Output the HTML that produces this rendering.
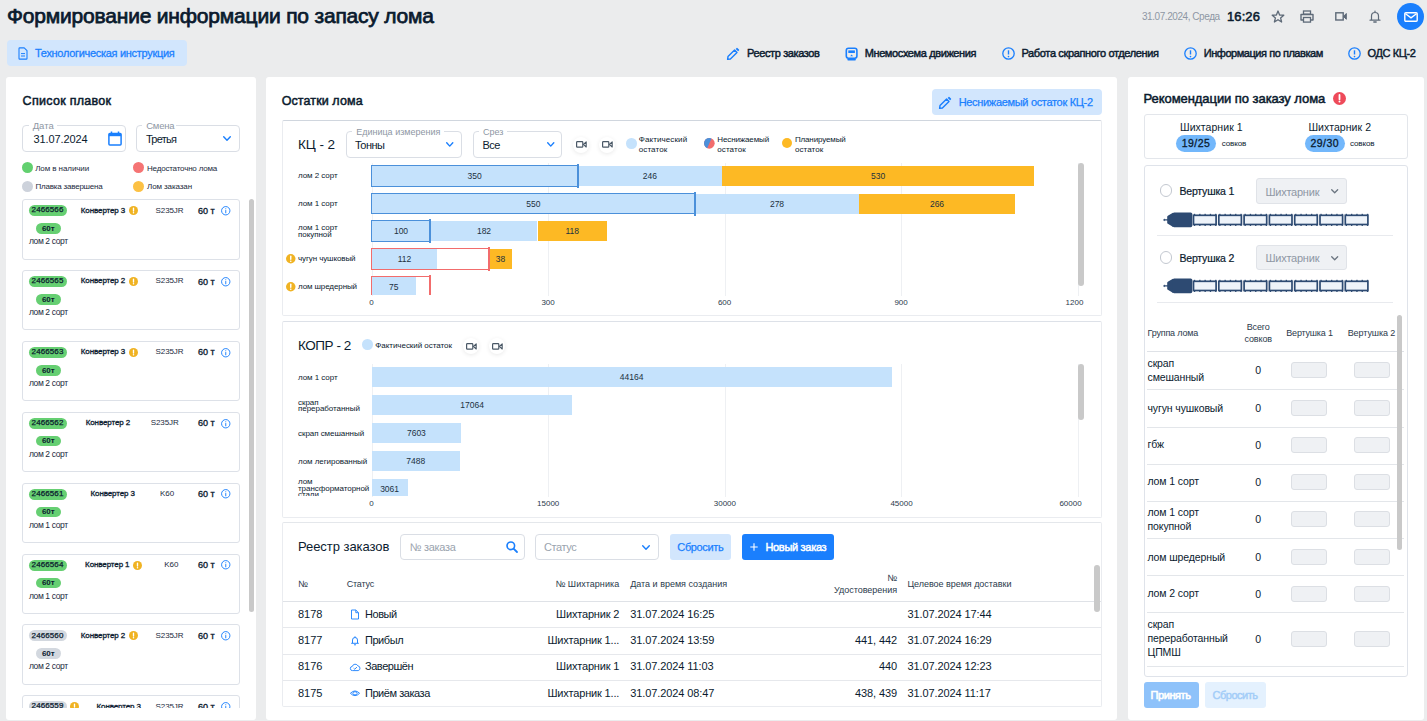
<!DOCTYPE html>
<html><head><meta charset="utf-8">
<style>
*{box-sizing:border-box;margin:0;padding:0}
html,body{width:1427px;height:721px;overflow:hidden;background:#ebeced;font-family:"Liberation Sans",sans-serif;color:#0b1b2f}
.a{position:absolute}
.t{position:absolute;white-space:nowrap;line-height:1}
.panel{position:absolute;background:#fff;border-radius:3px}
.box{position:absolute;border:1px solid #d5dae2;border-radius:3px}
svg{position:absolute;overflow:visible}
</style></head><body>
<!-- HEADER -->
<div class="t" style="left:7px;top:5.3px;font-size:21px;letter-spacing:-0.19px;color:#0a1a2d;-webkit-text-stroke:0.75px #0a1a2d">Формирование информации по запасу лома</div>
<div class="t" style="left:1142px;top:11.7px;font-size:10px;letter-spacing:-0.44px;color:#8e97a4">31.07.2024, Среда</div>
<div class="t" style="left:1227px;top:10px;font-size:13px;letter-spacing:0.1px;color:#0a1a2d;-webkit-text-stroke:0.55px #0a1a2d">16:26</div>
<!-- star -->
<svg style="left:1271px;top:10px" width="14" height="13" viewBox="0 0 14 13"><path d="M7 1 L8.6 5 L12.8 5.2 L9.6 7.9 L10.6 12 L7 9.7 L3.4 12 L4.4 7.9 L1.2 5.2 L5.4 5 Z" fill="none" stroke="#5e6a78" stroke-width="1.3" stroke-linejoin="round"/></svg>
<!-- printer -->
<svg style="left:1300px;top:10px" width="14" height="13" viewBox="0 0 14 13"><rect x="3.5" y="1" width="7" height="3.2" fill="none" stroke="#5e6a78" stroke-width="1.3"/><path d="M3 10 H1 V4.5 H13 V10 H11" fill="none" stroke="#5e6a78" stroke-width="1.4" stroke-linejoin="round"/><rect x="3.5" y="7.5" width="7" height="4.6" fill="none" stroke="#5e6a78" stroke-width="1.3"/></svg>
<!-- video -->
<svg style="left:1335px;top:12px" width="12" height="9" viewBox="0 0 12 9"><rect x="0.8" y="0.8" width="7.4" height="7.2" fill="none" stroke="#5e6a78" stroke-width="1.4"/><path d="M8.5 4.4 L11.3 1.5 V7.3 Z" fill="#5e6a78" stroke="#5e6a78" stroke-width="1"/></svg>
<!-- bell -->
<svg style="left:1369px;top:10px" width="12" height="13" viewBox="0 0 12 13"><path d="M1 10.2 H11 M2.5 10 V6 A3.5 3.5 0 0 1 9.5 6 V10 M6 1 V2.5" fill="none" stroke="#5e6a78" stroke-width="1.2" stroke-linecap="round"/><path d="M4.8 12 H7.2" stroke="#5e6a78" stroke-width="1.3" stroke-linecap="round"/></svg>
<!-- mail -->
<div class="a" style="left:1396.5px;top:3px;width:27px;height:27px;border-radius:50%;background:#1a7ffd"></div>
<svg style="left:1403.5px;top:12px" width="14" height="10" viewBox="0 0 14 10"><rect x="0.8" y="0.8" width="12.4" height="8.4" rx="1" fill="none" stroke="#fff" stroke-width="1.4"/><path d="M1.5 1.8 L7 5.8 L12.5 1.8" fill="none" stroke="#fff" stroke-width="1.4"/></svg>

<!-- NAV -->
<div class="a" style="left:6.5px;top:40px;width:180px;height:26px;border-radius:4px;background:#d2e6fd"></div>
<svg style="left:18px;top:47px" width="10" height="13" viewBox="0 0 10 13"><path d="M1 1.6 Q1 0.9 1.7 0.9 H6.2 L9 3.7 V11.4 Q9 12.1 8.3 12.1 H1.7 Q1 12.1 1 11.4 Z" fill="none" stroke="#1a7ffd" stroke-width="1.1" stroke-linejoin="round"/><path d="M3 6.6 H7 M3 9 H7" stroke="#1a7ffd" stroke-width="1"/></svg>
<div class="t" style="left:35px;top:47.8px;font-size:11px;letter-spacing:-0.3px;color:#1a7ffd;-webkit-text-stroke:0.3px #1a7ffd">Технологическая инструкция</div>

<svg style="left:726px;top:46.5px" width="14" height="14" viewBox="0 0 14 14"><path d="M1.6 12.4 L2 9.6 L8.6 3 L11 5.4 L4.4 12 Z" fill="none" stroke="#1a7ffd" stroke-width="1.4" stroke-linejoin="round"/><path d="M9.7 1.9 L10.6 1 Q11 0.6 11.4 1 L13 2.6 Q13.4 3 13 3.4 L12.1 4.3 Z" fill="#1a7ffd"/></svg>
<div class="t" style="left:747px;top:48.3px;font-size:11px;letter-spacing:-0.38px;-webkit-text-stroke:0.45px #0b1b2f">Реестр заказов</div>
<svg style="left:845px;top:46.5px" width="14" height="14" viewBox="0 0 14 14"><rect x="1.3" y="1.2" width="10.6" height="10" rx="2.2" fill="none" stroke="#1a7ffd" stroke-width="1.6"/><rect x="3.3" y="3.4" width="6.6" height="2.6" fill="#1a7ffd"/><path d="M5.2 9.2 L6.6 7.6 L8 9.2 Z" fill="#1a7ffd"/><rect x="2.4" y="11.4" width="8.4" height="2" rx="0.6" fill="#1a7ffd"/></svg>
<div class="t" style="left:864.7px;top:48.3px;font-size:11px;letter-spacing:-0.39px;-webkit-text-stroke:0.45px #0b1b2f">Мнемосхема движения</div>
<svg style="left:1001.5px;top:47px" width="13" height="13" viewBox="0 0 13 13"><circle cx="6.5" cy="6.5" r="5.7" fill="none" stroke="#1a7ffd" stroke-width="1.3"/><path d="M6.5 3.3 V7.5" stroke="#1a7ffd" stroke-width="1.4"/><circle cx="6.5" cy="9.6" r="0.8" fill="#1a7ffd"/></svg>
<div class="t" style="left:1021.5px;top:48.3px;font-size:11px;letter-spacing:-0.36px;-webkit-text-stroke:0.45px #0b1b2f">Работа скрапного отделения</div>
<svg style="left:1183.5px;top:47px" width="13" height="13" viewBox="0 0 13 13"><circle cx="6.5" cy="6.5" r="5.7" fill="none" stroke="#1a7ffd" stroke-width="1.3"/><path d="M6.5 3.3 V7.5" stroke="#1a7ffd" stroke-width="1.4"/><circle cx="6.5" cy="9.6" r="0.8" fill="#1a7ffd"/></svg>
<div class="t" style="left:1203.8px;top:48.3px;font-size:11px;letter-spacing:-0.46px;-webkit-text-stroke:0.45px #0b1b2f">Информация по плавкам</div>
<svg style="left:1348.3px;top:47px" width="13" height="13" viewBox="0 0 13 13"><circle cx="6.5" cy="6.5" r="5.7" fill="none" stroke="#1a7ffd" stroke-width="1.3"/><path d="M6.5 3.3 V7.5" stroke="#1a7ffd" stroke-width="1.4"/><circle cx="6.5" cy="9.6" r="0.8" fill="#1a7ffd"/></svg>
<div class="t" style="left:1367.6px;top:48.3px;font-size:11px;letter-spacing:-0.39px;-webkit-text-stroke:0.45px #0b1b2f">ОДС КЦ-2</div>

<!-- PANELS -->
<div class="panel" style="left:6px;top:77px;width:250px;height:643px"></div>
<div class="panel" style="left:266px;top:77px;width:851px;height:643px"></div>
<div class="panel" style="left:1128px;top:77px;width:296px;height:643px"></div>

<div class="t" style="left:22.6px;top:95.4px;font-size:12.5px;letter-spacing:0.29px;color:#0a1a2d;-webkit-text-stroke:0.5px #0a1a2d">Список плавок</div>
<div class="a" style="left:22px;top:125px;width:104px;height:27px;border:1px solid #dadee5;border-radius:4px"></div>
<div class="a" style="left:28.700000000000003px;top:124px;width:28.8px;height:3px;background:#fff"></div>
<div class="t" style="left:32.7px;top:121.3px;font-size:9.5px;color:#8e97a4">Дата</div>
<div class="t" style="left:33.5px;top:134.1px;font-size:11px;letter-spacing:-0.11px;color:#0b1b2f">31.07.2024</div>
<svg style="left:108px;top:131px" width="14" height="15" viewBox="0 0 14 15"><rect x="0.9" y="2.6" width="12.2" height="11.5" rx="1" fill="none" stroke="#1a7ffd" stroke-width="1.5"/><rect x="0.9" y="2.6" width="12.2" height="2.6" fill="#1a7ffd"/><path d="M3.5 0.5 V3 M10.5 0.5 V3" stroke="#1a7ffd" stroke-width="1.5"/></svg>
<div class="a" style="left:136px;top:125px;width:104px;height:27px;border:1px solid #dadee5;border-radius:4px"></div>
<div class="a" style="left:142.2px;top:124px;width:34.0px;height:3px;background:#fff"></div>
<div class="t" style="left:146.2px;top:121.3px;font-size:9.5px;letter-spacing:-0.2px;color:#8e97a4">Смена</div>
<div class="t" style="left:145.9px;top:134.1px;font-size:11px;letter-spacing:-0.73px;color:#0b1b2f">Третья</div>
<svg style="left:223.3px;top:136.3px" width="8" height="5" viewBox="0 0 8 5"><path d="M0.7 0.7 L4.0 4.3 L7.3 0.7" fill="none" stroke="#1a7ffd" stroke-width="1.4" stroke-linecap="round" stroke-linejoin="round"/></svg>
<div class="a" style="left:21.7px;top:161.9px;width:11px;height:11px;border-radius:50%;background:#62d06f"></div>
<div class="t" style="left:35.2px;top:164.8px;font-size:8px;letter-spacing:-0.08px;color:#1b2a3d">Лом в наличии</div>
<div class="a" style="left:133.2px;top:161.9px;width:11px;height:11px;border-radius:50%;background:#f57474"></div>
<div class="t" style="left:147.0px;top:164.8px;font-size:8px;letter-spacing:-0.19px;color:#1b2a3d">Недостаточно лома</div>
<div class="a" style="left:21.7px;top:180.5px;width:11px;height:11px;border-radius:50%;background:#cdd2db"></div>
<div class="t" style="left:35.5px;top:183.4px;font-size:8px;letter-spacing:-0.21px;color:#1b2a3d">Плавка завершена</div>
<div class="a" style="left:133.2px;top:180.5px;width:11px;height:11px;border-radius:50%;background:#fcc144"></div>
<div class="t" style="left:147.0px;top:183.4px;font-size:8px;letter-spacing:-0.1px;color:#1b2a3d">Лом заказан</div>
<div class="a" style="left:0;top:199px;width:260px;height:509px;overflow:hidden">
<div class="a" style="left:22px;top:0.3px;width:218px;height:60.3px;border:1px solid #dde1e8;border-radius:3px"></div>
<div class="a" style="left:28.5px;top:6.3px;width:38px;height:11px;border-radius:6px;background:#66cf72"></div>
<div class="t" style="left:31.6px;top:7.4px;font-size:8px;letter-spacing:0.1px;color:#0b1b2f;-webkit-text-stroke:0.25px #0b1b2f">2466566</div>
<div class="t" style="left:80.8px;top:7.5px;font-size:8px;letter-spacing:-0.11px;color:#0b1b2f;-webkit-text-stroke:0.3px #0b1b2f">Конвертер 3</div>
<svg style="left:128.8px;top:7.3px" width="9" height="9" viewBox="0 0 10 10"><circle cx="5" cy="5" r="5" fill="#f0b323"/><path d="M5 2.3 V5.6" stroke="#fff" stroke-width="1.5" stroke-linecap="round"/><circle cx="5" cy="7.6" r="0.85" fill="#fff"/></svg>
<div class="t" style="left:155.5px;top:7.5px;font-size:8px;letter-spacing:-0.08px;color:#1b2a3d">S235JR</div>
<div class="t" style="left:197.9px;top:7.7px;font-size:9px;letter-spacing:0.05px;color:#0b1b2f;-webkit-text-stroke:0.35px #0b1b2f">60 т</div>
<svg style="left:220.6px;top:7.1px" width="9.5" height="9.5" viewBox="0 0 10 10"><circle cx="5" cy="5" r="4.4" fill="none" stroke="#1a7ffd" stroke-width="1"/><path d="M5 4.3 V7.6" stroke="#1a7ffd" stroke-width="1"/><circle cx="5" cy="2.9" r="0.6" fill="#1a7ffd"/></svg>
<div class="a" style="left:36px;top:24.3px;width:25px;height:10.5px;border-radius:6px;background:#66cf72"></div>
<div class="t" style="left:41.9px;top:25.8px;font-size:8px;font-weight:700;color:#0b1b2f">60т</div>
<div class="t" style="left:28.9px;top:38.3px;font-size:8.5px;letter-spacing:-0.38px;color:#1b2a3d">лом 2 сорт</div>
<div class="a" style="left:22px;top:71.15px;width:218px;height:60.3px;border:1px solid #dde1e8;border-radius:3px"></div>
<div class="a" style="left:28.5px;top:77.15px;width:38px;height:11px;border-radius:6px;background:#66cf72"></div>
<div class="t" style="left:31.6px;top:78.3px;font-size:8px;letter-spacing:0.1px;color:#0b1b2f;-webkit-text-stroke:0.25px #0b1b2f">2466565</div>
<div class="t" style="left:80.8px;top:78.4px;font-size:8px;letter-spacing:-0.11px;color:#0b1b2f;-webkit-text-stroke:0.3px #0b1b2f">Конвертер 2</div>
<svg style="left:128.8px;top:78.2px" width="9" height="9" viewBox="0 0 10 10"><circle cx="5" cy="5" r="5" fill="#f0b323"/><path d="M5 2.3 V5.6" stroke="#fff" stroke-width="1.5" stroke-linecap="round"/><circle cx="5" cy="7.6" r="0.85" fill="#fff"/></svg>
<div class="t" style="left:155.5px;top:78.4px;font-size:8px;letter-spacing:-0.08px;color:#1b2a3d">S235JR</div>
<div class="t" style="left:197.9px;top:78.5px;font-size:9px;letter-spacing:0.05px;color:#0b1b2f;-webkit-text-stroke:0.35px #0b1b2f">60 т</div>
<svg style="left:220.6px;top:77.9px" width="9.5" height="9.5" viewBox="0 0 10 10"><circle cx="5" cy="5" r="4.4" fill="none" stroke="#1a7ffd" stroke-width="1"/><path d="M5 4.3 V7.6" stroke="#1a7ffd" stroke-width="1"/><circle cx="5" cy="2.9" r="0.6" fill="#1a7ffd"/></svg>
<div class="a" style="left:36px;top:95.15px;width:25px;height:10.5px;border-radius:6px;background:#66cf72"></div>
<div class="t" style="left:41.9px;top:96.7px;font-size:8px;font-weight:700;color:#0b1b2f">60т</div>
<div class="t" style="left:28.9px;top:109.2px;font-size:8.5px;letter-spacing:-0.38px;color:#1b2a3d">лом 2 сорт</div>
<div class="a" style="left:22px;top:142.0px;width:218px;height:60.3px;border:1px solid #dde1e8;border-radius:3px"></div>
<div class="a" style="left:28.5px;top:148.0px;width:38px;height:11px;border-radius:6px;background:#66cf72"></div>
<div class="t" style="left:31.6px;top:149.1px;font-size:8px;letter-spacing:0.1px;color:#0b1b2f;-webkit-text-stroke:0.25px #0b1b2f">2466563</div>
<div class="t" style="left:80.8px;top:149.2px;font-size:8px;letter-spacing:-0.11px;color:#0b1b2f;-webkit-text-stroke:0.3px #0b1b2f">Конвертер 3</div>
<svg style="left:128.8px;top:149.0px" width="9" height="9" viewBox="0 0 10 10"><circle cx="5" cy="5" r="5" fill="#f0b323"/><path d="M5 2.3 V5.6" stroke="#fff" stroke-width="1.5" stroke-linecap="round"/><circle cx="5" cy="7.6" r="0.85" fill="#fff"/></svg>
<div class="t" style="left:155.5px;top:149.2px;font-size:8px;letter-spacing:-0.08px;color:#1b2a3d">S235JR</div>
<div class="t" style="left:197.9px;top:149.4px;font-size:9px;letter-spacing:0.05px;color:#0b1b2f;-webkit-text-stroke:0.35px #0b1b2f">60 т</div>
<svg style="left:220.6px;top:148.8px" width="9.5" height="9.5" viewBox="0 0 10 10"><circle cx="5" cy="5" r="4.4" fill="none" stroke="#1a7ffd" stroke-width="1"/><path d="M5 4.3 V7.6" stroke="#1a7ffd" stroke-width="1"/><circle cx="5" cy="2.9" r="0.6" fill="#1a7ffd"/></svg>
<div class="a" style="left:36px;top:166.0px;width:25px;height:10.5px;border-radius:6px;background:#66cf72"></div>
<div class="t" style="left:41.9px;top:167.5px;font-size:8px;font-weight:700;color:#0b1b2f">60т</div>
<div class="t" style="left:28.9px;top:180.0px;font-size:8.5px;letter-spacing:-0.38px;color:#1b2a3d">лом 2 сорт</div>
<div class="a" style="left:22px;top:212.85px;width:218px;height:60.3px;border:1px solid #dde1e8;border-radius:3px"></div>
<div class="a" style="left:28.5px;top:218.85px;width:38px;height:11px;border-radius:6px;background:#66cf72"></div>
<div class="t" style="left:31.6px;top:220.0px;font-size:8px;letter-spacing:0.1px;color:#0b1b2f;-webkit-text-stroke:0.25px #0b1b2f">2466562</div>
<div class="t" style="left:85.7px;top:220.1px;font-size:8px;letter-spacing:-0.11px;color:#0b1b2f;-webkit-text-stroke:0.3px #0b1b2f">Конвертер 2</div>
<div class="t" style="left:150.7px;top:220.1px;font-size:8px;letter-spacing:-0.08px;color:#1b2a3d">S235JR</div>
<div class="t" style="left:197.9px;top:220.2px;font-size:9px;letter-spacing:0.05px;color:#0b1b2f;-webkit-text-stroke:0.35px #0b1b2f">60 т</div>
<svg style="left:220.6px;top:219.6px" width="9.5" height="9.5" viewBox="0 0 10 10"><circle cx="5" cy="5" r="4.4" fill="none" stroke="#1a7ffd" stroke-width="1"/><path d="M5 4.3 V7.6" stroke="#1a7ffd" stroke-width="1"/><circle cx="5" cy="2.9" r="0.6" fill="#1a7ffd"/></svg>
<div class="a" style="left:36px;top:236.85px;width:25px;height:10.5px;border-radius:6px;background:#66cf72"></div>
<div class="t" style="left:41.9px;top:238.4px;font-size:8px;font-weight:700;color:#0b1b2f">60т</div>
<div class="t" style="left:28.9px;top:250.9px;font-size:8.5px;letter-spacing:-0.38px;color:#1b2a3d">лом 2 сорт</div>
<div class="a" style="left:22px;top:283.7px;width:218px;height:60.3px;border:1px solid #dde1e8;border-radius:3px"></div>
<div class="a" style="left:28.5px;top:289.7px;width:38px;height:11px;border-radius:6px;background:#66cf72"></div>
<div class="t" style="left:31.6px;top:290.8px;font-size:8px;letter-spacing:0.1px;color:#0b1b2f;-webkit-text-stroke:0.25px #0b1b2f">2466561</div>
<div class="t" style="left:90.5px;top:290.9px;font-size:8px;letter-spacing:-0.11px;color:#0b1b2f;-webkit-text-stroke:0.3px #0b1b2f">Конвертер 3</div>
<div class="t" style="left:160.0px;top:290.9px;font-size:8px;letter-spacing:-0.08px;color:#1b2a3d">K60</div>
<div class="t" style="left:197.9px;top:291.1px;font-size:9px;letter-spacing:0.05px;color:#0b1b2f;-webkit-text-stroke:0.35px #0b1b2f">60 т</div>
<svg style="left:220.6px;top:290.4px" width="9.5" height="9.5" viewBox="0 0 10 10"><circle cx="5" cy="5" r="4.4" fill="none" stroke="#1a7ffd" stroke-width="1"/><path d="M5 4.3 V7.6" stroke="#1a7ffd" stroke-width="1"/><circle cx="5" cy="2.9" r="0.6" fill="#1a7ffd"/></svg>
<div class="a" style="left:36px;top:307.7px;width:25px;height:10.5px;border-radius:6px;background:#66cf72"></div>
<div class="t" style="left:41.9px;top:309.2px;font-size:8px;font-weight:700;color:#0b1b2f">60т</div>
<div class="t" style="left:28.9px;top:321.7px;font-size:8.5px;letter-spacing:-0.38px;color:#1b2a3d">лом 1 сорт</div>
<div class="a" style="left:22px;top:354.55px;width:218px;height:60.3px;border:1px solid #dde1e8;border-radius:3px"></div>
<div class="a" style="left:28.5px;top:360.55px;width:38px;height:11px;border-radius:6px;background:#66cf72"></div>
<div class="t" style="left:31.6px;top:361.7px;font-size:8px;letter-spacing:0.1px;color:#0b1b2f;-webkit-text-stroke:0.25px #0b1b2f">2466564</div>
<div class="t" style="left:85.1px;top:361.8px;font-size:8px;letter-spacing:-0.11px;color:#0b1b2f;-webkit-text-stroke:0.3px #0b1b2f">Конвертер 1</div>
<svg style="left:133.1px;top:361.6px" width="9" height="9" viewBox="0 0 10 10"><circle cx="5" cy="5" r="5" fill="#f0b323"/><path d="M5 2.3 V5.6" stroke="#fff" stroke-width="1.5" stroke-linecap="round"/><circle cx="5" cy="7.6" r="0.85" fill="#fff"/></svg>
<div class="t" style="left:164.3px;top:361.8px;font-size:8px;letter-spacing:-0.08px;color:#1b2a3d">K60</div>
<div class="t" style="left:197.9px;top:361.9px;font-size:9px;letter-spacing:0.05px;color:#0b1b2f;-webkit-text-stroke:0.35px #0b1b2f">60 т</div>
<svg style="left:220.6px;top:361.3px" width="9.5" height="9.5" viewBox="0 0 10 10"><circle cx="5" cy="5" r="4.4" fill="none" stroke="#1a7ffd" stroke-width="1"/><path d="M5 4.3 V7.6" stroke="#1a7ffd" stroke-width="1"/><circle cx="5" cy="2.9" r="0.6" fill="#1a7ffd"/></svg>
<div class="a" style="left:36px;top:378.55px;width:25px;height:10.5px;border-radius:6px;background:#66cf72"></div>
<div class="t" style="left:41.9px;top:380.1px;font-size:8px;font-weight:700;color:#0b1b2f">60т</div>
<div class="t" style="left:28.9px;top:392.6px;font-size:8.5px;letter-spacing:-0.38px;color:#1b2a3d">лом 1 сорт</div>
<div class="a" style="left:22px;top:425.4px;width:218px;height:60.3px;border:1px solid #dde1e8;border-radius:3px"></div>
<div class="a" style="left:28.5px;top:431.4px;width:38px;height:11px;border-radius:6px;background:#d3d8df"></div>
<div class="t" style="left:31.6px;top:432.5px;font-size:8px;letter-spacing:0.1px;color:#0b1b2f;-webkit-text-stroke:0.25px #0b1b2f">2466560</div>
<div class="t" style="left:80.8px;top:432.6px;font-size:8px;letter-spacing:-0.11px;color:#0b1b2f;-webkit-text-stroke:0.3px #0b1b2f">Конвертер 2</div>
<svg style="left:128.8px;top:432.4px" width="9" height="9" viewBox="0 0 10 10"><circle cx="5" cy="5" r="5" fill="#f0b323"/><path d="M5 2.3 V5.6" stroke="#fff" stroke-width="1.5" stroke-linecap="round"/><circle cx="5" cy="7.6" r="0.85" fill="#fff"/></svg>
<div class="t" style="left:155.5px;top:432.6px;font-size:8px;letter-spacing:-0.08px;color:#1b2a3d">S235JR</div>
<div class="t" style="left:197.9px;top:432.8px;font-size:9px;letter-spacing:0.05px;color:#0b1b2f;-webkit-text-stroke:0.35px #0b1b2f">60 т</div>
<svg style="left:220.6px;top:432.1px" width="9.5" height="9.5" viewBox="0 0 10 10"><circle cx="5" cy="5" r="4.4" fill="none" stroke="#1a7ffd" stroke-width="1"/><path d="M5 4.3 V7.6" stroke="#1a7ffd" stroke-width="1"/><circle cx="5" cy="2.9" r="0.6" fill="#1a7ffd"/></svg>
<div class="a" style="left:36px;top:449.4px;width:25px;height:10.5px;border-radius:6px;background:#d3d8df"></div>
<div class="t" style="left:41.9px;top:450.9px;font-size:8px;font-weight:700;color:#0b1b2f">60т</div>
<div class="t" style="left:28.9px;top:463.4px;font-size:8.5px;letter-spacing:-0.38px;color:#1b2a3d">лом 2 сорт</div>
<div class="a" style="left:22px;top:496.25px;width:218px;height:60.3px;border:1px solid #dde1e8;border-radius:3px"></div>
<div class="a" style="left:28.5px;top:502.25px;width:38px;height:11px;border-radius:6px;background:#d3d8df"></div>
<div class="t" style="left:31.6px;top:503.4px;font-size:8px;letter-spacing:0.1px;color:#0b1b2f;-webkit-text-stroke:0.25px #0b1b2f">2466559</div>
<div class="t" style="left:96.5px;top:503.5px;font-size:8px;letter-spacing:-0.11px;color:#0b1b2f;-webkit-text-stroke:0.3px #0b1b2f">Конвертер 3</div>
<svg style="left:69.8px;top:503.2px" width="9" height="9" viewBox="0 0 10 10"><circle cx="5" cy="5" r="5" fill="#f0b323"/><path d="M5 2.3 V5.6" stroke="#fff" stroke-width="1.5" stroke-linecap="round"/><circle cx="5" cy="7.6" r="0.85" fill="#fff"/></svg>
<div class="t" style="left:155.5px;top:503.5px;font-size:8px;letter-spacing:-0.08px;color:#1b2a3d">S235JR</div>
<div class="t" style="left:197.9px;top:503.6px;font-size:9px;letter-spacing:0.05px;color:#0b1b2f;-webkit-text-stroke:0.35px #0b1b2f">60 т</div>
<svg style="left:220.6px;top:503.0px" width="9.5" height="9.5" viewBox="0 0 10 10"><circle cx="5" cy="5" r="4.4" fill="none" stroke="#1a7ffd" stroke-width="1"/><path d="M5 4.3 V7.6" stroke="#1a7ffd" stroke-width="1"/><circle cx="5" cy="2.9" r="0.6" fill="#1a7ffd"/></svg>
<div class="a" style="left:36px;top:520.25px;width:25px;height:10.5px;border-radius:6px;background:#d3d8df"></div>
<div class="t" style="left:41.9px;top:521.8px;font-size:8px;font-weight:700;color:#0b1b2f">60т</div>
<div class="t" style="left:28.9px;top:534.3px;font-size:8.5px;letter-spacing:-0.38px;color:#1b2a3d">лом 2 сорт</div>
</div>
<div class="a" style="left:249px;top:199px;width:5px;height:413px;border-radius:3px;background:#c9c9c9"></div>
<div class="t" style="left:281.7px;top:95.1px;font-size:12.5px;letter-spacing:0.1px;color:#0a1a2d;-webkit-text-stroke:0.5px #0a1a2d">Остатки лома</div>
<div class="a" style="left:931.5px;top:89.3px;width:170.5px;height:25.5px;border-radius:4px;background:#d2e6fd"></div>
<svg style="left:937.5px;top:95.5px" width="14" height="14" viewBox="0 0 14 14"><path d="M1.6 12.4 L2 9.6 L8.6 3 L11 5.4 L4.4 12 Z" fill="none" stroke="#1a7ffd" stroke-width="1.4" stroke-linejoin="round"/><path d="M9.7 1.9 L10.6 1 Q11 0.6 11.4 1 L13 2.6 Q13.4 3 13 3.4 L12.1 4.3 Z" fill="#1a7ffd"/></svg>
<div class="t" style="left:958.7px;top:96.9px;font-size:11px;letter-spacing:-0.32px;color:#1a7ffd;-webkit-text-stroke:0.25px #1a7ffd">Неснижаемый остаток КЦ-2</div>
<div class="a" style="left:282px;top:120px;width:820px;height:196px;border:1px solid #eaecf0;border-top-color:#d0d6de;border-radius:2px"></div>
<div class="t" style="left:298.0px;top:137.8px;font-size:13.5px;letter-spacing:-0.07px;color:#0b1b2f">КЦ - 2</div>
<div class="a" style="left:346.2px;top:131.1px;width:115.7px;height:26.7px;border:1px solid #dadee5;border-radius:4px"></div>
<div class="a" style="left:352.2px;top:130.1px;width:92px;height:3px;background:#fff"></div>
<div class="t" style="left:356.2px;top:128.1px;font-size:9px;color:#8e97a4">Единица измерения</div>
<div class="t" style="left:355.0px;top:139.6px;font-size:11px;letter-spacing:-0.53px;color:#0b1b2f">Тонны</div>
<svg style="left:445.7px;top:142px" width="7.5" height="4.8" viewBox="0 0 7.5 4.8"><path d="M0.7 0.7 L3.75 4.1 L6.8 0.7" fill="none" stroke="#1a7ffd" stroke-width="1.4" stroke-linecap="round" stroke-linejoin="round"/></svg>
<div class="a" style="left:473.1px;top:131.1px;width:89.3px;height:26.7px;border:1px solid #dadee5;border-radius:4px"></div>
<div class="a" style="left:479px;top:130.1px;width:28px;height:3px;background:#fff"></div>
<div class="t" style="left:483.0px;top:128.1px;font-size:9px;color:#8e97a4">Срез</div>
<div class="t" style="left:482.5px;top:139.6px;font-size:11px;letter-spacing:-0.5px;color:#0b1b2f">Все</div>
<svg style="left:546.7px;top:141.7px" width="7.5" height="4.8" viewBox="0 0 7.5 4.8"><path d="M0.7 0.7 L3.75 4.1 L6.8 0.7" fill="none" stroke="#1a7ffd" stroke-width="1.4" stroke-linecap="round" stroke-linejoin="round"/></svg>
<div class="a" style="left:573.3px;top:136.7px;width:16px;height:16px;border-radius:50%;background:#fff;box-shadow:0 1px 4px rgba(0,0,0,0.09)"></div>
<svg style="left:576.3px;top:141.2px" width="11" height="7" viewBox="0 0 11 7"><rect x="0.6" y="0.6" width="6.2" height="5.6" rx="0.8" fill="none" stroke="#4a5866" stroke-width="1.2"/><path d="M7.4 3.4 L10.2 0.8 V6 Z" fill="none" stroke="#4a5866" stroke-width="1.1" stroke-linejoin="round"/></svg>
<div class="a" style="left:598.8px;top:136.7px;width:16px;height:16px;border-radius:50%;background:#fff;box-shadow:0 1px 4px rgba(0,0,0,0.09)"></div>
<svg style="left:601.8px;top:141.2px" width="11" height="7" viewBox="0 0 11 7"><rect x="0.6" y="0.6" width="6.2" height="5.6" rx="0.8" fill="none" stroke="#4a5866" stroke-width="1.2"/><path d="M7.4 3.4 L10.2 0.8 V6 Z" fill="none" stroke="#4a5866" stroke-width="1.1" stroke-linejoin="round"/></svg>
<div class="a" style="left:626px;top:138px;width:10.5px;height:10.5px;border-radius:50%;background:#c5e2fc"></div>
<div class="t" style="left:638.8px;top:136.2px;font-size:8px;letter-spacing:0.1px;color:#0b1b2f">Фактический</div>
<div class="t" style="left:638.8px;top:145.7px;font-size:8px;letter-spacing:0.1px;color:#0b1b2f">остаток</div>
<svg style="left:703.8px;top:137.8px" width="10.7" height="10.7" viewBox="0 0 10 10"><circle cx="5" cy="5" r="5" fill="#f26c6c"/><path d="M7 0.4 A5 5 0 0 0 3 9.6 Z" fill="#4b90da"/></svg>
<div class="t" style="left:717.3px;top:136.2px;font-size:8px;letter-spacing:-0.12px;color:#0b1b2f">Неснижаемый</div>
<div class="t" style="left:717.3px;top:145.7px;font-size:8px;letter-spacing:0.1px;color:#0b1b2f">остаток</div>
<div class="a" style="left:781.7px;top:137.8px;width:10.7px;height:10.7px;border-radius:50%;background:#fdb924"></div>
<div class="t" style="left:794.9px;top:136.2px;font-size:8px;letter-spacing:-0.13px;color:#0b1b2f">Планируемый</div>
<div class="t" style="left:794.9px;top:145.7px;font-size:8px;letter-spacing:0.1px;color:#0b1b2f">остаток</div>
<div class="a" style="left:372px;top:163px;width:1px;height:133px;background:#eef0f3"></div>
<div class="t" style="left:371.6px;transform:translateX(-50%);top:299.2px;font-size:8px;color:#2b3a4c">0</div>
<div class="a" style="left:548px;top:163px;width:1px;height:133px;background:#eef0f3"></div>
<div class="t" style="left:548.1px;transform:translateX(-50%);top:299.2px;font-size:8px;color:#2b3a4c">300</div>
<div class="a" style="left:725px;top:163px;width:1px;height:133px;background:#eef0f3"></div>
<div class="t" style="left:724.6px;transform:translateX(-50%);top:299.2px;font-size:8px;color:#2b3a4c">600</div>
<div class="a" style="left:901px;top:163px;width:1px;height:133px;background:#eef0f3"></div>
<div class="t" style="left:901.1px;transform:translateX(-50%);top:299.2px;font-size:8px;color:#2b3a4c">900</div>
<div class="a" style="left:1078px;top:163px;width:1px;height:133px;background:#eef0f3"></div>
<div class="t" style="left:1074.5px;transform:translateX(-50%);top:299.2px;font-size:8px;color:#2b3a4c">1200</div>
<div class="a" style="left:282px;top:163px;width:810px;height:131.6px;overflow:hidden">
<div class="a" style="left:89.6px;top:2.9px;width:205.9px;height:20px;background:#c5e2fc"></div>
<div class="a" style="left:295.5px;top:2.9px;width:144.7px;height:20px;background:#c5e2fc"></div>
<div class="a" style="left:440.2px;top:2.9px;width:311.8px;height:20px;background:#fdb924"></div>
<div class="a" style="left:88.9px;top:2.2px;width:207.3px;height:21.4px;border:1.5px solid #4b90da"></div>
<div class="a" style="left:294.5px;top:0.9px;width:2px;height:24px;background:#4b90da"></div>
<div class="t" style="left:192.6px;transform:translateX(-50%);top:8.9px;font-size:8.5px;color:#22313f">350</div>
<div class="t" style="left:367.9px;transform:translateX(-50%);top:8.9px;font-size:8.5px;color:#22313f">246</div>
<div class="t" style="left:596.2px;transform:translateX(-50%);top:8.9px;font-size:8.5px;color:#22313f">530</div>
<div class="a" style="left:89.6px;top:30.8px;width:323.6px;height:20px;background:#c5e2fc"></div>
<div class="a" style="left:413.2px;top:30.8px;width:163.6px;height:20px;background:#c5e2fc"></div>
<div class="a" style="left:576.7px;top:30.8px;width:156.5px;height:20px;background:#fdb924"></div>
<div class="a" style="left:88.9px;top:30.1px;width:325.0px;height:21.4px;border:1.5px solid #4b90da"></div>
<div class="a" style="left:412.2px;top:28.8px;width:2px;height:24px;background:#4b90da"></div>
<div class="t" style="left:251.4px;transform:translateX(-50%);top:36.8px;font-size:8.5px;color:#22313f">550</div>
<div class="t" style="left:495.0px;transform:translateX(-50%);top:36.8px;font-size:8.5px;color:#22313f">278</div>
<div class="t" style="left:655.0px;transform:translateX(-50%);top:36.8px;font-size:8.5px;color:#22313f">266</div>
<div class="a" style="left:89.6px;top:58.1px;width:58.8px;height:20px;background:#c5e2fc"></div>
<div class="a" style="left:148.4px;top:58.1px;width:107.1px;height:20px;background:#c5e2fc"></div>
<div class="a" style="left:255.5px;top:58.1px;width:69.4px;height:20px;background:#fdb924"></div>
<div class="a" style="left:88.9px;top:57.4px;width:60.2px;height:21.4px;border:1.5px solid #4b90da"></div>
<div class="a" style="left:147.4px;top:56.1px;width:2px;height:24px;background:#4b90da"></div>
<div class="t" style="left:119.0px;transform:translateX(-50%);top:64.1px;font-size:8.5px;color:#22313f">100</div>
<div class="t" style="left:202.0px;transform:translateX(-50%);top:64.1px;font-size:8.5px;color:#22313f">182</div>
<div class="t" style="left:290.2px;transform:translateX(-50%);top:64.1px;font-size:8.5px;color:#22313f">118</div>
<div class="a" style="left:89.60000000000002px;top:86.0px;width:65.9px;height:20px;background:#c5e2fc"></div>
<div class="a" style="left:207.3px;top:86.0px;width:22.4px;height:20px;background:#fdb924"></div>
<div class="a" style="left:88.9px;top:85.3px;width:119.1px;height:21.4px;border:1.5px solid #f26c6c"></div>
<div class="a" style="left:206.3px;top:84.0px;width:2px;height:24px;background:#f26c6c"></div>
<div class="t" style="left:122.5px;transform:translateX(-50%);top:92.0px;font-size:8.5px;color:#22313f">112</div>
<div class="t" style="left:218.4px;transform:translateX(-50%);top:92.0px;font-size:8.5px;color:#22313f">38</div>
<div class="a" style="left:89.60000000000002px;top:113.7px;width:44.1px;height:20px;background:#c5e2fc"></div>
<div class="a" style="left:88.9px;top:113.0px;width:60.2px;height:21.4px;border:1.5px solid #f26c6c"></div>
<div class="a" style="left:147.4px;top:111.7px;width:2px;height:24px;background:#f26c6c"></div>
<div class="t" style="left:111.7px;transform:translateX(-50%);top:119.7px;font-size:8.5px;color:#22313f">75</div>
</div>
<div class="t" style="left:298.0px;top:172.2px;font-size:8px;letter-spacing:-0.05px;color:#0b1b2f">лом 2 сорт</div>
<div class="t" style="left:298.0px;top:199.7px;font-size:8px;letter-spacing:-0.05px;color:#0b1b2f">лом 1 сорт</div>
<div class="t" style="left:298.0px;top:224.2px;font-size:8px;letter-spacing:-0.05px;color:#0b1b2f">лом 1 сорт</div>
<div class="t" style="left:298.0px;top:230.7px;font-size:8px;letter-spacing:-0.05px;color:#0b1b2f">покупной</div>
<svg style="left:285.8px;top:253.9px" width="9.5" height="9.5" viewBox="0 0 10 10"><circle cx="5" cy="5" r="5" fill="#f0b323"/><path d="M5 2.3 V5.6" stroke="#fff" stroke-width="1.5" stroke-linecap="round"/><circle cx="5" cy="7.6" r="0.85" fill="#fff"/></svg>
<div class="t" style="left:298.0px;top:254.7px;font-size:8px;letter-spacing:-0.1px;color:#0b1b2f">чугун чушковый</div>
<svg style="left:285.8px;top:281.6px" width="9.5" height="9.5" viewBox="0 0 10 10"><circle cx="5" cy="5" r="5" fill="#f0b323"/><path d="M5 2.3 V5.6" stroke="#fff" stroke-width="1.5" stroke-linecap="round"/><circle cx="5" cy="7.6" r="0.85" fill="#fff"/></svg>
<div class="t" style="left:298.0px;top:282.5px;font-size:8px;letter-spacing:-0.1px;color:#0b1b2f">лом шредерный</div>
<div class="a" style="left:1077.6px;top:162.7px;width:6px;height:123.7px;border-radius:3px;background:#c9c9c9"></div>
<div class="a" style="left:282px;top:321px;width:820px;height:196.5px;border:1px solid #eaecf0;border-top-color:#dde1e8;border-radius:2px"></div>
<div class="t" style="left:298.0px;top:338.6px;font-size:13.5px;letter-spacing:-0.45px;color:#0b1b2f">КОПР - 2</div>
<div class="a" style="left:362px;top:339.2px;width:10.6px;height:10.6px;border-radius:50%;background:#c5e2fc"></div>
<div class="t" style="left:375.3px;top:342.0px;font-size:8px;letter-spacing:-0.04px;color:#0b1b2f">Фактический остаток</div>
<div class="a" style="left:462.7px;top:338.0px;width:16px;height:16px;border-radius:50%;background:#fff;box-shadow:0 1px 4px rgba(0,0,0,0.09)"></div>
<svg style="left:465.7px;top:342.5px" width="11" height="7" viewBox="0 0 11 7"><rect x="0.6" y="0.6" width="6.2" height="5.6" rx="0.8" fill="none" stroke="#4a5866" stroke-width="1.2"/><path d="M7.4 3.4 L10.2 0.8 V6 Z" fill="none" stroke="#4a5866" stroke-width="1.1" stroke-linejoin="round"/></svg>
<div class="a" style="left:489.3px;top:338.0px;width:16px;height:16px;border-radius:50%;background:#fff;box-shadow:0 1px 4px rgba(0,0,0,0.09)"></div>
<svg style="left:492.3px;top:342.5px" width="11" height="7" viewBox="0 0 11 7"><rect x="0.6" y="0.6" width="6.2" height="5.6" rx="0.8" fill="none" stroke="#4a5866" stroke-width="1.2"/><path d="M7.4 3.4 L10.2 0.8 V6 Z" fill="none" stroke="#4a5866" stroke-width="1.1" stroke-linejoin="round"/></svg>
<div class="a" style="left:372px;top:364px;width:1px;height:133px;background:#eef0f3"></div>
<div class="t" style="left:371.6px;transform:translateX(-50%);top:500.2px;font-size:8px;color:#2b3a4c">0</div>
<div class="a" style="left:548px;top:364px;width:1px;height:133px;background:#eef0f3"></div>
<div class="t" style="left:548.2px;transform:translateX(-50%);top:500.2px;font-size:8px;color:#2b3a4c">15000</div>
<div class="a" style="left:725px;top:364px;width:1px;height:133px;background:#eef0f3"></div>
<div class="t" style="left:724.9px;transform:translateX(-50%);top:500.2px;font-size:8px;color:#2b3a4c">30000</div>
<div class="a" style="left:901px;top:364px;width:1px;height:133px;background:#eef0f3"></div>
<div class="t" style="left:901.5px;transform:translateX(-50%);top:500.2px;font-size:8px;color:#2b3a4c">45000</div>
<div class="a" style="left:1078px;top:364px;width:1px;height:133px;background:#eef0f3"></div>
<div class="t" style="left:1070.5px;transform:translateX(-50%);top:500.2px;font-size:8px;color:#2b3a4c">60000</div>
<div class="a" style="left:282px;top:364px;width:810px;height:131.5px;overflow:hidden">
<div class="a" style="left:89.60000000000002px;top:3.4px;width:520.0px;height:20px;background:#c5e2fc"></div>
<div class="t" style="left:349.6px;transform:translateX(-50%);top:9.4px;font-size:8.5px;color:#22313f">44164</div>
<div class="a" style="left:89.60000000000002px;top:31.2px;width:200.9px;height:20px;background:#c5e2fc"></div>
<div class="t" style="left:190.1px;transform:translateX(-50%);top:37.2px;font-size:8.5px;color:#22313f">17064</div>
<div class="a" style="left:89.60000000000002px;top:59.2px;width:89.5px;height:20px;background:#c5e2fc"></div>
<div class="t" style="left:134.4px;transform:translateX(-50%);top:65.2px;font-size:8.5px;color:#22313f">7603</div>
<div class="a" style="left:89.60000000000002px;top:87.3px;width:88.2px;height:20px;background:#c5e2fc"></div>
<div class="t" style="left:133.7px;transform:translateX(-50%);top:93.3px;font-size:8.5px;color:#22313f">7488</div>
<div class="a" style="left:89.60000000000002px;top:115.1px;width:36.0px;height:20px;background:#c5e2fc"></div>
<div class="t" style="left:107.6px;transform:translateX(-50%);top:121.1px;font-size:8.5px;color:#22313f">3061</div>
</div>
<div class="t" style="left:298.0px;top:373.9px;font-size:8px;letter-spacing:-0.05px;color:#0b1b2f">лом 1 сорт</div>
<div class="t" style="left:298.0px;top:398.7px;font-size:8px;letter-spacing:-0.05px;color:#0b1b2f">скрап</div>
<div class="t" style="left:298.0px;top:404.9px;font-size:8px;letter-spacing:-0.05px;color:#0b1b2f">переработанный</div>
<div class="t" style="left:298.0px;top:429.9px;font-size:8px;letter-spacing:-0.05px;color:#0b1b2f">скрап смешанный</div>
<div class="t" style="left:298.0px;top:457.9px;font-size:8px;letter-spacing:-0.05px;color:#0b1b2f">лом легированный</div>
<div class="a" style="left:290px;top:476px;width:90px;height:19.5px;overflow:hidden">
<div class="t" style="left:8.0px;top:2.2px;font-size:8px;letter-spacing:-0.05px;color:#0b1b2f">лом</div>
<div class="t" style="left:8.0px;top:8.7px;font-size:8px;letter-spacing:-0.05px;color:#0b1b2f">трансформаторной</div>
<div class="t" style="left:8.0px;top:15.2px;font-size:8px;letter-spacing:-0.05px;color:#0b1b2f">стали</div>
</div>
<div class="a" style="left:1077.8px;top:363.8px;width:6px;height:56.4px;border-radius:3px;background:#c9c9c9"></div>
<div class="a" style="left:282px;top:522.3px;width:820px;height:184.5px;border:1px solid #eaecf0;border-top-color:#e4e7eb;border-radius:2px"></div>
<div class="t" style="left:297.9px;top:540.1px;font-size:13px;letter-spacing:-0.04px;color:#0b1b2f">Реестр заказов</div>
<div class="a" style="left:400px;top:533.9px;width:124.7px;height:26px;border:1px solid #dadee5;border-radius:4px"></div>
<div class="t" style="left:409.8px;top:542.2px;font-size:11px;letter-spacing:-0.32px;color:#9aa3ae">№ заказа</div>
<svg style="left:505.5px;top:540.5px" width="12" height="12" viewBox="0 0 12 12"><circle cx="4.8" cy="4.8" r="3.8" fill="none" stroke="#1a7ffd" stroke-width="1.6"/><path d="M7.6 7.6 L11 11" stroke="#1a7ffd" stroke-width="1.8" stroke-linecap="round"/></svg>
<div class="a" style="left:535.1px;top:533.9px;width:123.7px;height:26px;border:1px solid #dadee5;border-radius:4px"></div>
<div class="t" style="left:543.9px;top:542.2px;font-size:11px;letter-spacing:-0.36px;color:#9aa3ae">Статус</div>
<svg style="left:642.4px;top:544.5px" width="8" height="5" viewBox="0 0 8 5"><path d="M0.7 0.7 L4.0 4.3 L7.3 0.7" fill="none" stroke="#1a7ffd" stroke-width="1.4" stroke-linecap="round" stroke-linejoin="round"/></svg>
<div class="a" style="left:669.5px;top:533.9px;width:61.4px;height:26px;border-radius:3px;background:#d2e6fd"></div>
<div class="t" style="left:677.3px;top:541.9px;font-size:11px;letter-spacing:-0.36px;color:#1a7ffd;-webkit-text-stroke:0.25px #1a7ffd">Сбросить</div>
<div class="a" style="left:741.9px;top:533.9px;width:92px;height:26px;border-radius:3px;background:#1a7ffd"></div>
<svg style="left:749.5px;top:543px" width="8" height="8" viewBox="0 0 8 8"><path d="M4 0.3 V7.7 M0.3 4 H7.7" stroke="#fff" stroke-width="1.1"/></svg>
<div class="t" style="left:765.4px;top:541.9px;font-size:11px;letter-spacing:-0.3px;color:#fff;-webkit-text-stroke:0.45px #fff">Новый заказ</div>
<div class="t" style="left:298.0px;top:580.2px;font-size:9px;color:#2b3a4c">№</div>
<div class="t" style="left:346.7px;top:580.2px;font-size:9px;letter-spacing:-0.19px;color:#2b3a4c">Статус</div>
<div class="t" style="right:807.8px;top:580.2px;font-size:9px;letter-spacing:0.05px;color:#2b3a4c">№ Шихтарника</div>
<div class="t" style="left:630.2px;top:580.2px;font-size:9px;color:#2b3a4c">Дата и время создания</div>
<div class="t" style="right:530.0px;top:573.9px;font-size:9px;color:#2b3a4c">№</div>
<div class="t" style="right:530.0px;top:586.1px;font-size:9px;letter-spacing:-0.03px;color:#2b3a4c">Удостоверения</div>
<div class="t" style="left:907.4px;top:580.2px;font-size:9px;letter-spacing:-0.03px;color:#2b3a4c">Целевое время доставки</div>
<div class="a" style="left:283px;top:600.8px;width:818px;height:1px;background:#dfe2e7"></div>
<div class="t" style="left:298.0px;top:608.7px;font-size:11px;letter-spacing:-0.05px;color:#0b1b2f">8178</div>
<svg style="left:349.5px;top:609.0px" width="10" height="10" viewBox="0 0 10 10"><path d="M1.5 1 H5.8 L8.5 3.7 V10 H1.5 Z M5.8 1 V3.7 H8.5" fill="none" stroke="#1a7ffd" stroke-width="0.9" stroke-linejoin="round"/></svg>
<div class="t" style="left:365.0px;top:608.7px;font-size:11px;letter-spacing:-0.45px;color:#0b1b2f">Новый</div>
<div class="t" style="right:807.8px;top:608.7px;font-size:11px;letter-spacing:-0.17px;color:#0b1b2f">Шихтарник 2</div>
<div class="t" style="left:630.2px;top:608.7px;font-size:11px;letter-spacing:-0.09px;color:#0b1b2f">31.07.2024 16:25</div>
<div class="t" style="left:907.4px;top:608.7px;font-size:11px;letter-spacing:-0.09px;color:#0b1b2f">31.07.2024 17:44</div>
<div class="a" style="left:283px;top:627.2px;width:818px;height:1px;background:#e6e8ec"></div>
<div class="t" style="left:298.0px;top:635.0px;font-size:11px;letter-spacing:-0.05px;color:#0b1b2f">8177</div>
<svg style="left:349.5px;top:635.3px" width="10" height="10" viewBox="0 0 10 10"><path d="M1.2 8.3 H8.8 M2.5 8 V5 A2.5 2.5 0 0 1 7.5 5 V8 M5 1.3 V2.5 M4 9.8 H6" fill="none" stroke="#1a7ffd" stroke-width="0.95"/></svg>
<div class="t" style="left:365.0px;top:635.0px;font-size:11px;letter-spacing:-0.45px;color:#0b1b2f">Прибыл</div>
<div class="t" style="right:807.8px;top:635.0px;font-size:11px;letter-spacing:-0.17px;color:#0b1b2f">Шихтарник 1...</div>
<div class="t" style="left:630.2px;top:635.0px;font-size:11px;letter-spacing:-0.09px;color:#0b1b2f">31.07.2024 13:59</div>
<div class="t" style="right:530.0px;top:635.0px;font-size:11px;letter-spacing:-0.09px;color:#0b1b2f">441, 442</div>
<div class="t" style="left:907.4px;top:635.0px;font-size:11px;letter-spacing:-0.09px;color:#0b1b2f">31.07.2024 16:29</div>
<div class="a" style="left:283px;top:653.5px;width:818px;height:1px;background:#e6e8ec"></div>
<div class="t" style="left:298.0px;top:661.3px;font-size:11px;letter-spacing:-0.05px;color:#0b1b2f">8176</div>
<svg style="left:349.5px;top:661.6px" width="10" height="10" viewBox="0 0 10 10"><path d="M2.6 8.6 A2.1 2.1 0 0 1 2.3 4.4 A3 3 0 0 1 7.9 3.9 A2.4 2.4 0 0 1 8.2 8.6 Z" fill="none" stroke="#1a7ffd" stroke-width="0.9"/><path d="M3.6 6.2 L4.8 7.3 L6.9 5" fill="none" stroke="#1a7ffd" stroke-width="0.9"/></svg>
<div class="t" style="left:365.0px;top:661.3px;font-size:11px;letter-spacing:-0.45px;color:#0b1b2f">Завершён</div>
<div class="t" style="right:807.8px;top:661.3px;font-size:11px;letter-spacing:-0.17px;color:#0b1b2f">Шихтарник 1</div>
<div class="t" style="left:630.2px;top:661.3px;font-size:11px;letter-spacing:-0.09px;color:#0b1b2f">31.07.2024 11:03</div>
<div class="t" style="right:530.0px;top:661.3px;font-size:11px;letter-spacing:-0.09px;color:#0b1b2f">440</div>
<div class="t" style="left:907.4px;top:661.3px;font-size:11px;letter-spacing:-0.09px;color:#0b1b2f">31.07.2024 12:23</div>
<div class="a" style="left:283px;top:679.8000000000001px;width:818px;height:1px;background:#e6e8ec"></div>
<div class="t" style="left:298.0px;top:687.6px;font-size:11px;letter-spacing:-0.05px;color:#0b1b2f">8175</div>
<svg style="left:349.5px;top:687.9px" width="10" height="10" viewBox="0 0 10 10"><path d="M0.4 5.3 Q5 0.6 9.6 5.3 Q5 10 0.4 5.3 Z" fill="none" stroke="#1a7ffd" stroke-width="0.9"/><ellipse cx="5" cy="5.3" rx="2.2" ry="1.6" fill="none" stroke="#1a7ffd" stroke-width="0.9"/></svg>
<div class="t" style="left:365.0px;top:687.6px;font-size:11px;letter-spacing:-0.45px;color:#0b1b2f">Приём заказа</div>
<div class="t" style="right:807.8px;top:687.6px;font-size:11px;letter-spacing:-0.17px;color:#0b1b2f">Шихтарник 1...</div>
<div class="t" style="left:630.2px;top:687.6px;font-size:11px;letter-spacing:-0.09px;color:#0b1b2f">31.07.2024 08:47</div>
<div class="t" style="right:530.0px;top:687.6px;font-size:11px;letter-spacing:-0.09px;color:#0b1b2f">438, 439</div>
<div class="t" style="left:907.4px;top:687.6px;font-size:11px;letter-spacing:-0.09px;color:#0b1b2f">31.07.2024 11:17</div>
<div class="a" style="left:1094px;top:565.3px;width:5.5px;height:46.7px;border-radius:3px;background:#c9c9c9"></div>
<div class="t" style="left:1143.5px;top:91.6px;font-size:13px;letter-spacing:-0.06px;color:#0a1a2d;-webkit-text-stroke:0.5px #0a1a2d">Рекомендации по заказу лома</div>
<svg style="left:1332.5px;top:91.8px" width="13" height="13" viewBox="0 0 13 13"><circle cx="6.5" cy="6.5" r="6.5" fill="#ee4a5a"/><path d="M6.5 3 V7.2" stroke="#fff" stroke-width="1.8" stroke-linecap="round"/><circle cx="6.5" cy="9.6" r="1" fill="#fff"/></svg>
<div class="a" style="left:1143.5px;top:114.3px;width:264px;height:44.3px;border:1px solid #e3e6eb;border-radius:3px"></div>
<div class="t" style="left:1180.0px;top:122.1px;font-size:10.5px;letter-spacing:0.06px;color:#0b1b2f">Шихтарник 1</div>
<div class="a" style="left:1176px;top:135px;width:40.1px;height:17px;border-radius:9px;background:#72b7fb"></div>
<div class="t" style="left:1181.7px;top:137.9px;font-size:10.5px;letter-spacing:0.46px;color:#0b1b2f;-webkit-text-stroke:0.3px #0b1b2f">19/25</div>
<div class="t" style="left:1221.7px;top:140.1px;font-size:8px;letter-spacing:-0.1px;color:#0b1b2f">совков</div>
<div class="t" style="left:1308.4px;top:122.1px;font-size:10.5px;letter-spacing:0.06px;color:#0b1b2f">Шихтарник 2</div>
<div class="a" style="left:1304.8px;top:135px;width:40.1px;height:17px;border-radius:9px;background:#72b7fb"></div>
<div class="t" style="left:1310.5px;top:137.9px;font-size:10.5px;letter-spacing:0.46px;color:#0b1b2f;-webkit-text-stroke:0.3px #0b1b2f">29/30</div>
<div class="t" style="left:1350.0px;top:140.1px;font-size:8px;letter-spacing:-0.1px;color:#0b1b2f">совков</div>
<div class="a" style="left:1143.5px;top:164.6px;width:264.5px;height:512.6px;border:1px solid #dfe3ea;border-radius:3px"></div>
<div class="a" style="left:1159.6px;top:184.4px;width:12.8px;height:12.8px;border-radius:50%;border:1px solid #c3c8d0;background:#fff"></div>
<div class="t" style="left:1179.4px;top:186.0px;font-size:10.5px;letter-spacing:-0.17px;color:#0b1b2f;-webkit-text-stroke:0.2px #0b1b2f">Вертушка 1</div>
<div class="a" style="left:1256.3px;top:178.4px;width:90.5px;height:25.2px;border:1px solid #e0e3e8;border-radius:3px;background:#eff1f4"></div>
<div class="t" style="left:1265.5px;top:186.5px;font-size:11px;letter-spacing:-0.23px;color:#8e97a4">Шихтарник</div>
<svg style="left:1330.7px;top:189.10000000000002px" width="7.4" height="4.4" viewBox="0 0 7.4 4.4"><path d="M0.7 0.7 L3.7 3.7 L6.7 0.7" fill="none" stroke="#6b7580" stroke-width="1.3" stroke-linecap="round" stroke-linejoin="round"/></svg>
<svg style="left:1162px;top:211.5px" width="210" height="16" viewBox="0 0 210 16"><path d="M1 7.9 L2.6 6.6 L2.8 7.2 L5.2 7.2 L5.2 4.4 Q6 3.6 11 0.8 V14.9 Q6 12 5.2 11.3 L5.2 8.6 L2.8 8.6 L2.6 9.2 Z" fill="#2d4a72"/><rect x="10.5" y="0.5" width="19.8" height="14.7" rx="1.6" fill="#2d4a72"/><rect x="31.5" y="3.3" width="22.6" height="9.2" fill="#eef3f9" stroke="#2d4a72" stroke-width="1.7"/><rect x="31.9" y="1.8" width="1.3" height="1.2" fill="#2d4a72"/><rect x="31.9" y="12.8" width="1.3" height="1.2" fill="#2d4a72"/><rect x="37.2" y="1.8" width="1.3" height="1.2" fill="#2d4a72"/><rect x="37.2" y="12.8" width="1.3" height="1.2" fill="#2d4a72"/><rect x="42.5" y="1.8" width="1.3" height="1.2" fill="#2d4a72"/><rect x="42.5" y="12.8" width="1.3" height="1.2" fill="#2d4a72"/><rect x="47.8" y="1.8" width="1.3" height="1.2" fill="#2d4a72"/><rect x="47.8" y="12.8" width="1.3" height="1.2" fill="#2d4a72"/><rect x="53.1" y="1.8" width="1.3" height="1.2" fill="#2d4a72"/><rect x="53.1" y="12.8" width="1.3" height="1.2" fill="#2d4a72"/><rect x="56.8" y="3.3" width="22.6" height="9.2" fill="#eef3f9" stroke="#2d4a72" stroke-width="1.7"/><rect x="57.2" y="1.8" width="1.3" height="1.2" fill="#2d4a72"/><rect x="57.2" y="12.8" width="1.3" height="1.2" fill="#2d4a72"/><rect x="62.5" y="1.8" width="1.3" height="1.2" fill="#2d4a72"/><rect x="62.5" y="12.8" width="1.3" height="1.2" fill="#2d4a72"/><rect x="67.8" y="1.8" width="1.3" height="1.2" fill="#2d4a72"/><rect x="67.8" y="12.8" width="1.3" height="1.2" fill="#2d4a72"/><rect x="73.1" y="1.8" width="1.3" height="1.2" fill="#2d4a72"/><rect x="73.1" y="12.8" width="1.3" height="1.2" fill="#2d4a72"/><rect x="78.4" y="1.8" width="1.3" height="1.2" fill="#2d4a72"/><rect x="78.4" y="12.8" width="1.3" height="1.2" fill="#2d4a72"/><rect x="82.1" y="3.3" width="22.6" height="9.2" fill="#eef3f9" stroke="#2d4a72" stroke-width="1.7"/><rect x="82.5" y="1.8" width="1.3" height="1.2" fill="#2d4a72"/><rect x="82.5" y="12.8" width="1.3" height="1.2" fill="#2d4a72"/><rect x="87.8" y="1.8" width="1.3" height="1.2" fill="#2d4a72"/><rect x="87.8" y="12.8" width="1.3" height="1.2" fill="#2d4a72"/><rect x="93.1" y="1.8" width="1.3" height="1.2" fill="#2d4a72"/><rect x="93.1" y="12.8" width="1.3" height="1.2" fill="#2d4a72"/><rect x="98.4" y="1.8" width="1.3" height="1.2" fill="#2d4a72"/><rect x="98.4" y="12.8" width="1.3" height="1.2" fill="#2d4a72"/><rect x="103.7" y="1.8" width="1.3" height="1.2" fill="#2d4a72"/><rect x="103.7" y="12.8" width="1.3" height="1.2" fill="#2d4a72"/><rect x="107.4" y="3.3" width="22.6" height="9.2" fill="#eef3f9" stroke="#2d4a72" stroke-width="1.7"/><rect x="107.8" y="1.8" width="1.3" height="1.2" fill="#2d4a72"/><rect x="107.8" y="12.8" width="1.3" height="1.2" fill="#2d4a72"/><rect x="113.1" y="1.8" width="1.3" height="1.2" fill="#2d4a72"/><rect x="113.1" y="12.8" width="1.3" height="1.2" fill="#2d4a72"/><rect x="118.4" y="1.8" width="1.3" height="1.2" fill="#2d4a72"/><rect x="118.4" y="12.8" width="1.3" height="1.2" fill="#2d4a72"/><rect x="123.7" y="1.8" width="1.3" height="1.2" fill="#2d4a72"/><rect x="123.7" y="12.8" width="1.3" height="1.2" fill="#2d4a72"/><rect x="129.0" y="1.8" width="1.3" height="1.2" fill="#2d4a72"/><rect x="129.0" y="12.8" width="1.3" height="1.2" fill="#2d4a72"/><rect x="132.7" y="3.3" width="22.6" height="9.2" fill="#eef3f9" stroke="#2d4a72" stroke-width="1.7"/><rect x="133.1" y="1.8" width="1.3" height="1.2" fill="#2d4a72"/><rect x="133.1" y="12.8" width="1.3" height="1.2" fill="#2d4a72"/><rect x="138.4" y="1.8" width="1.3" height="1.2" fill="#2d4a72"/><rect x="138.4" y="12.8" width="1.3" height="1.2" fill="#2d4a72"/><rect x="143.7" y="1.8" width="1.3" height="1.2" fill="#2d4a72"/><rect x="143.7" y="12.8" width="1.3" height="1.2" fill="#2d4a72"/><rect x="149.0" y="1.8" width="1.3" height="1.2" fill="#2d4a72"/><rect x="149.0" y="12.8" width="1.3" height="1.2" fill="#2d4a72"/><rect x="154.3" y="1.8" width="1.3" height="1.2" fill="#2d4a72"/><rect x="154.3" y="12.8" width="1.3" height="1.2" fill="#2d4a72"/><rect x="158.0" y="3.3" width="22.6" height="9.2" fill="#eef3f9" stroke="#2d4a72" stroke-width="1.7"/><rect x="158.4" y="1.8" width="1.3" height="1.2" fill="#2d4a72"/><rect x="158.4" y="12.8" width="1.3" height="1.2" fill="#2d4a72"/><rect x="163.7" y="1.8" width="1.3" height="1.2" fill="#2d4a72"/><rect x="163.7" y="12.8" width="1.3" height="1.2" fill="#2d4a72"/><rect x="169.0" y="1.8" width="1.3" height="1.2" fill="#2d4a72"/><rect x="169.0" y="12.8" width="1.3" height="1.2" fill="#2d4a72"/><rect x="174.3" y="1.8" width="1.3" height="1.2" fill="#2d4a72"/><rect x="174.3" y="12.8" width="1.3" height="1.2" fill="#2d4a72"/><rect x="179.6" y="1.8" width="1.3" height="1.2" fill="#2d4a72"/><rect x="179.6" y="12.8" width="1.3" height="1.2" fill="#2d4a72"/><rect x="183.3" y="3.3" width="22.6" height="9.2" fill="#eef3f9" stroke="#2d4a72" stroke-width="1.7"/><rect x="183.7" y="1.8" width="1.3" height="1.2" fill="#2d4a72"/><rect x="183.7" y="12.8" width="1.3" height="1.2" fill="#2d4a72"/><rect x="189.0" y="1.8" width="1.3" height="1.2" fill="#2d4a72"/><rect x="189.0" y="12.8" width="1.3" height="1.2" fill="#2d4a72"/><rect x="194.3" y="1.8" width="1.3" height="1.2" fill="#2d4a72"/><rect x="194.3" y="12.8" width="1.3" height="1.2" fill="#2d4a72"/><rect x="199.6" y="1.8" width="1.3" height="1.2" fill="#2d4a72"/><rect x="199.6" y="12.8" width="1.3" height="1.2" fill="#2d4a72"/><rect x="204.9" y="1.8" width="1.3" height="1.2" fill="#2d4a72"/><rect x="204.9" y="12.8" width="1.3" height="1.2" fill="#2d4a72"/></svg>
<div class="a" style="left:1157.4px;top:235.0px;width:236px;height:1px;background:#e8eaee"></div>
<div class="a" style="left:1159.6px;top:251.1px;width:12.8px;height:12.8px;border-radius:50%;border:1px solid #c3c8d0;background:#fff"></div>
<div class="t" style="left:1179.4px;top:252.7px;font-size:10.5px;letter-spacing:-0.17px;color:#0b1b2f;-webkit-text-stroke:0.2px #0b1b2f">Вертушка 2</div>
<div class="a" style="left:1256.3px;top:245.1px;width:90.5px;height:25.2px;border:1px solid #e0e3e8;border-radius:3px;background:#eff1f4"></div>
<div class="t" style="left:1265.5px;top:253.2px;font-size:11px;letter-spacing:-0.23px;color:#8e97a4">Шихтарник</div>
<svg style="left:1330.7px;top:255.8px" width="7.4" height="4.4" viewBox="0 0 7.4 4.4"><path d="M0.7 0.7 L3.7 3.7 L6.7 0.7" fill="none" stroke="#6b7580" stroke-width="1.3" stroke-linecap="round" stroke-linejoin="round"/></svg>
<svg style="left:1162px;top:278.2px" width="210" height="16" viewBox="0 0 210 16"><path d="M1 7.9 L2.6 6.6 L2.8 7.2 L5.2 7.2 L5.2 4.4 Q6 3.6 11 0.8 V14.9 Q6 12 5.2 11.3 L5.2 8.6 L2.8 8.6 L2.6 9.2 Z" fill="#2d4a72"/><rect x="10.5" y="0.5" width="19.8" height="14.7" rx="1.6" fill="#2d4a72"/><rect x="31.5" y="3.3" width="22.6" height="9.2" fill="#eef3f9" stroke="#2d4a72" stroke-width="1.7"/><rect x="31.9" y="1.8" width="1.3" height="1.2" fill="#2d4a72"/><rect x="31.9" y="12.8" width="1.3" height="1.2" fill="#2d4a72"/><rect x="37.2" y="1.8" width="1.3" height="1.2" fill="#2d4a72"/><rect x="37.2" y="12.8" width="1.3" height="1.2" fill="#2d4a72"/><rect x="42.5" y="1.8" width="1.3" height="1.2" fill="#2d4a72"/><rect x="42.5" y="12.8" width="1.3" height="1.2" fill="#2d4a72"/><rect x="47.8" y="1.8" width="1.3" height="1.2" fill="#2d4a72"/><rect x="47.8" y="12.8" width="1.3" height="1.2" fill="#2d4a72"/><rect x="53.1" y="1.8" width="1.3" height="1.2" fill="#2d4a72"/><rect x="53.1" y="12.8" width="1.3" height="1.2" fill="#2d4a72"/><rect x="56.8" y="3.3" width="22.6" height="9.2" fill="#eef3f9" stroke="#2d4a72" stroke-width="1.7"/><rect x="57.2" y="1.8" width="1.3" height="1.2" fill="#2d4a72"/><rect x="57.2" y="12.8" width="1.3" height="1.2" fill="#2d4a72"/><rect x="62.5" y="1.8" width="1.3" height="1.2" fill="#2d4a72"/><rect x="62.5" y="12.8" width="1.3" height="1.2" fill="#2d4a72"/><rect x="67.8" y="1.8" width="1.3" height="1.2" fill="#2d4a72"/><rect x="67.8" y="12.8" width="1.3" height="1.2" fill="#2d4a72"/><rect x="73.1" y="1.8" width="1.3" height="1.2" fill="#2d4a72"/><rect x="73.1" y="12.8" width="1.3" height="1.2" fill="#2d4a72"/><rect x="78.4" y="1.8" width="1.3" height="1.2" fill="#2d4a72"/><rect x="78.4" y="12.8" width="1.3" height="1.2" fill="#2d4a72"/><rect x="82.1" y="3.3" width="22.6" height="9.2" fill="#eef3f9" stroke="#2d4a72" stroke-width="1.7"/><rect x="82.5" y="1.8" width="1.3" height="1.2" fill="#2d4a72"/><rect x="82.5" y="12.8" width="1.3" height="1.2" fill="#2d4a72"/><rect x="87.8" y="1.8" width="1.3" height="1.2" fill="#2d4a72"/><rect x="87.8" y="12.8" width="1.3" height="1.2" fill="#2d4a72"/><rect x="93.1" y="1.8" width="1.3" height="1.2" fill="#2d4a72"/><rect x="93.1" y="12.8" width="1.3" height="1.2" fill="#2d4a72"/><rect x="98.4" y="1.8" width="1.3" height="1.2" fill="#2d4a72"/><rect x="98.4" y="12.8" width="1.3" height="1.2" fill="#2d4a72"/><rect x="103.7" y="1.8" width="1.3" height="1.2" fill="#2d4a72"/><rect x="103.7" y="12.8" width="1.3" height="1.2" fill="#2d4a72"/><rect x="107.4" y="3.3" width="22.6" height="9.2" fill="#eef3f9" stroke="#2d4a72" stroke-width="1.7"/><rect x="107.8" y="1.8" width="1.3" height="1.2" fill="#2d4a72"/><rect x="107.8" y="12.8" width="1.3" height="1.2" fill="#2d4a72"/><rect x="113.1" y="1.8" width="1.3" height="1.2" fill="#2d4a72"/><rect x="113.1" y="12.8" width="1.3" height="1.2" fill="#2d4a72"/><rect x="118.4" y="1.8" width="1.3" height="1.2" fill="#2d4a72"/><rect x="118.4" y="12.8" width="1.3" height="1.2" fill="#2d4a72"/><rect x="123.7" y="1.8" width="1.3" height="1.2" fill="#2d4a72"/><rect x="123.7" y="12.8" width="1.3" height="1.2" fill="#2d4a72"/><rect x="129.0" y="1.8" width="1.3" height="1.2" fill="#2d4a72"/><rect x="129.0" y="12.8" width="1.3" height="1.2" fill="#2d4a72"/><rect x="132.7" y="3.3" width="22.6" height="9.2" fill="#eef3f9" stroke="#2d4a72" stroke-width="1.7"/><rect x="133.1" y="1.8" width="1.3" height="1.2" fill="#2d4a72"/><rect x="133.1" y="12.8" width="1.3" height="1.2" fill="#2d4a72"/><rect x="138.4" y="1.8" width="1.3" height="1.2" fill="#2d4a72"/><rect x="138.4" y="12.8" width="1.3" height="1.2" fill="#2d4a72"/><rect x="143.7" y="1.8" width="1.3" height="1.2" fill="#2d4a72"/><rect x="143.7" y="12.8" width="1.3" height="1.2" fill="#2d4a72"/><rect x="149.0" y="1.8" width="1.3" height="1.2" fill="#2d4a72"/><rect x="149.0" y="12.8" width="1.3" height="1.2" fill="#2d4a72"/><rect x="154.3" y="1.8" width="1.3" height="1.2" fill="#2d4a72"/><rect x="154.3" y="12.8" width="1.3" height="1.2" fill="#2d4a72"/><rect x="158.0" y="3.3" width="22.6" height="9.2" fill="#eef3f9" stroke="#2d4a72" stroke-width="1.7"/><rect x="158.4" y="1.8" width="1.3" height="1.2" fill="#2d4a72"/><rect x="158.4" y="12.8" width="1.3" height="1.2" fill="#2d4a72"/><rect x="163.7" y="1.8" width="1.3" height="1.2" fill="#2d4a72"/><rect x="163.7" y="12.8" width="1.3" height="1.2" fill="#2d4a72"/><rect x="169.0" y="1.8" width="1.3" height="1.2" fill="#2d4a72"/><rect x="169.0" y="12.8" width="1.3" height="1.2" fill="#2d4a72"/><rect x="174.3" y="1.8" width="1.3" height="1.2" fill="#2d4a72"/><rect x="174.3" y="12.8" width="1.3" height="1.2" fill="#2d4a72"/><rect x="179.6" y="1.8" width="1.3" height="1.2" fill="#2d4a72"/><rect x="179.6" y="12.8" width="1.3" height="1.2" fill="#2d4a72"/><rect x="183.3" y="3.3" width="22.6" height="9.2" fill="#eef3f9" stroke="#2d4a72" stroke-width="1.7"/><rect x="183.7" y="1.8" width="1.3" height="1.2" fill="#2d4a72"/><rect x="183.7" y="12.8" width="1.3" height="1.2" fill="#2d4a72"/><rect x="189.0" y="1.8" width="1.3" height="1.2" fill="#2d4a72"/><rect x="189.0" y="12.8" width="1.3" height="1.2" fill="#2d4a72"/><rect x="194.3" y="1.8" width="1.3" height="1.2" fill="#2d4a72"/><rect x="194.3" y="12.8" width="1.3" height="1.2" fill="#2d4a72"/><rect x="199.6" y="1.8" width="1.3" height="1.2" fill="#2d4a72"/><rect x="199.6" y="12.8" width="1.3" height="1.2" fill="#2d4a72"/><rect x="204.9" y="1.8" width="1.3" height="1.2" fill="#2d4a72"/><rect x="204.9" y="12.8" width="1.3" height="1.2" fill="#2d4a72"/></svg>
<div class="a" style="left:1157.4px;top:301.7px;width:236px;height:1px;background:#e8eaee"></div>
<div class="t" style="left:1147.5px;top:329.2px;font-size:9px;letter-spacing:-0.18px;color:#2b3a4c">Группа лома</div>
<div class="t" style="left:1258.2px;transform:translateX(-50%);top:322.5px;font-size:9px;letter-spacing:-0.12px;color:#2b3a4c">Всего</div>
<div class="t" style="left:1258.2px;transform:translateX(-50%);top:335.3px;font-size:9px;letter-spacing:-0.12px;color:#2b3a4c">совков</div>
<div class="t" style="left:1286.3px;top:329.2px;font-size:9px;letter-spacing:-0.2px;color:#2b3a4c">Вертушка 1</div>
<div class="t" style="left:1347.7px;top:329.2px;font-size:9px;letter-spacing:-0.08px;color:#2b3a4c">Вертушка 2</div>
<div class="a" style="left:1147px;top:351px;width:257px;height:1px;background:#dfe2e7"></div>
<div class="a" style="left:1144px;top:352px;width:263px;height:320px;overflow:hidden">
<div class="t" style="left:3.5px;top:6.2px;font-size:10.5px;letter-spacing:-0.12px;color:#0b1b2f">скрап</div>
<div class="t" style="left:3.5px;top:20.0px;font-size:10.5px;letter-spacing:-0.12px;color:#0b1b2f">смешанный</div>
<div class="t" style="left:114.2px;transform:translateX(-50%);top:13.1px;font-size:10.5px;color:#0b1b2f">0</div>
<div class="a" style="left:146.9px;top:10.2px;width:36.6px;height:16.2px;border:1px solid #dcdfe4;border-radius:3px;background:#eff1f4"></div>
<div class="a" style="left:209.5px;top:10.2px;width:36.3px;height:16.2px;border:1px solid #dcdfe4;border-radius:3px;background:#eff1f4"></div>
<div class="a" style="left:3px;top:37.4px;width:257px;height:1px;background:#e3e6ea"></div>
<div class="t" style="left:3.5px;top:50.5px;font-size:10.5px;letter-spacing:-0.12px;color:#0b1b2f">чугун чушковый</div>
<div class="t" style="left:114.2px;transform:translateX(-50%);top:51.2px;font-size:10.5px;color:#0b1b2f">0</div>
<div class="a" style="left:146.9px;top:48.3px;width:36.6px;height:16.2px;border:1px solid #dcdfe4;border-radius:3px;background:#eff1f4"></div>
<div class="a" style="left:209.5px;top:48.3px;width:36.3px;height:16.2px;border:1px solid #dcdfe4;border-radius:3px;background:#eff1f4"></div>
<div class="a" style="left:3px;top:74.6px;width:257px;height:1px;background:#e3e6ea"></div>
<div class="t" style="left:3.5px;top:87.2px;font-size:10.5px;letter-spacing:-0.12px;color:#0b1b2f">гбж</div>
<div class="t" style="left:114.2px;transform:translateX(-50%);top:87.9px;font-size:10.5px;color:#0b1b2f">0</div>
<div class="a" style="left:146.9px;top:85.0px;width:36.6px;height:16.2px;border:1px solid #dcdfe4;border-radius:3px;background:#eff1f4"></div>
<div class="a" style="left:209.5px;top:85.0px;width:36.3px;height:16.2px;border:1px solid #dcdfe4;border-radius:3px;background:#eff1f4"></div>
<div class="a" style="left:3px;top:111.6px;width:257px;height:1px;background:#e3e6ea"></div>
<div class="t" style="left:3.5px;top:124.4px;font-size:10.5px;letter-spacing:-0.12px;color:#0b1b2f">лом 1 сорт</div>
<div class="t" style="left:114.2px;transform:translateX(-50%);top:125.1px;font-size:10.5px;color:#0b1b2f">0</div>
<div class="a" style="left:146.9px;top:122.2px;width:36.6px;height:16.2px;border:1px solid #dcdfe4;border-radius:3px;background:#eff1f4"></div>
<div class="a" style="left:209.5px;top:122.2px;width:36.3px;height:16.2px;border:1px solid #dcdfe4;border-radius:3px;background:#eff1f4"></div>
<div class="a" style="left:3px;top:148.5px;width:257px;height:1px;background:#e3e6ea"></div>
<div class="t" style="left:3.5px;top:155.1px;font-size:10.5px;letter-spacing:-0.12px;color:#0b1b2f">лом 1 сорт</div>
<div class="t" style="left:3.5px;top:169.2px;font-size:10.5px;letter-spacing:-0.12px;color:#0b1b2f">покупной</div>
<div class="t" style="left:114.2px;transform:translateX(-50%);top:161.9px;font-size:10.5px;color:#0b1b2f">0</div>
<div class="a" style="left:146.9px;top:159.0px;width:36.6px;height:16.2px;border:1px solid #dcdfe4;border-radius:3px;background:#eff1f4"></div>
<div class="a" style="left:209.5px;top:159.0px;width:36.3px;height:16.2px;border:1px solid #dcdfe4;border-radius:3px;background:#eff1f4"></div>
<div class="a" style="left:3px;top:186.3px;width:257px;height:1px;background:#e3e6ea"></div>
<div class="t" style="left:3.5px;top:199.5px;font-size:10.5px;letter-spacing:-0.12px;color:#0b1b2f">лом шредерный</div>
<div class="t" style="left:114.2px;transform:translateX(-50%);top:200.2px;font-size:10.5px;color:#0b1b2f">0</div>
<div class="a" style="left:146.9px;top:197.3px;width:36.6px;height:16.2px;border:1px solid #dcdfe4;border-radius:3px;background:#eff1f4"></div>
<div class="a" style="left:209.5px;top:197.3px;width:36.3px;height:16.2px;border:1px solid #dcdfe4;border-radius:3px;background:#eff1f4"></div>
<div class="a" style="left:3px;top:223.4px;width:257px;height:1px;background:#e3e6ea"></div>
<div class="t" style="left:3.5px;top:236.2px;font-size:10.5px;letter-spacing:-0.12px;color:#0b1b2f">лом 2 сорт</div>
<div class="t" style="left:114.2px;transform:translateX(-50%);top:236.9px;font-size:10.5px;color:#0b1b2f">0</div>
<div class="a" style="left:146.9px;top:234.0px;width:36.6px;height:16.2px;border:1px solid #dcdfe4;border-radius:3px;background:#eff1f4"></div>
<div class="a" style="left:209.5px;top:234.0px;width:36.3px;height:16.2px;border:1px solid #dcdfe4;border-radius:3px;background:#eff1f4"></div>
<div class="a" style="left:3px;top:260.4px;width:257px;height:1px;background:#e3e6ea"></div>
<div class="t" style="left:3.5px;top:266.9px;font-size:10.5px;letter-spacing:-0.12px;color:#0b1b2f">скрап</div>
<div class="t" style="left:3.5px;top:281.0px;font-size:10.5px;letter-spacing:-0.12px;color:#0b1b2f">переработанный</div>
<div class="t" style="left:3.5px;top:294.8px;font-size:10.5px;letter-spacing:-0.12px;color:#0b1b2f">ЦПМШ</div>
<div class="t" style="left:114.2px;transform:translateX(-50%);top:281.7px;font-size:10.5px;color:#0b1b2f">0</div>
<div class="a" style="left:146.9px;top:278.8px;width:36.6px;height:16.2px;border:1px solid #dcdfe4;border-radius:3px;background:#eff1f4"></div>
<div class="a" style="left:209.5px;top:278.8px;width:36.3px;height:16.2px;border:1px solid #dcdfe4;border-radius:3px;background:#eff1f4"></div>
<div class="a" style="left:3px;top:313.5px;width:257px;height:1px;background:#e3e6ea"></div>
</div>
<div class="a" style="left:1397.1px;top:315.3px;width:5.3px;height:234.3px;border-radius:3px;background:#c9c9c9"></div>
<div class="a" style="left:1143.6px;top:682.2px;width:55.4px;height:25.6px;border-radius:3px;background:#8ec2fa"></div>
<div class="t" style="left:1150.5px;top:689.7px;font-size:11px;letter-spacing:-0.42px;color:#fff;-webkit-text-stroke:0.6px #fff">Принять</div>
<div class="a" style="left:1204.9px;top:682.2px;width:61.2px;height:25.6px;border-radius:3px;background:#e4f1fe"></div>
<div class="t" style="left:1212.5px;top:689.7px;font-size:11px;letter-spacing:-0.49px;color:#a3cdf8;-webkit-text-stroke:0.45px #a3cdf8">Сбросить</div>
</body></html>
